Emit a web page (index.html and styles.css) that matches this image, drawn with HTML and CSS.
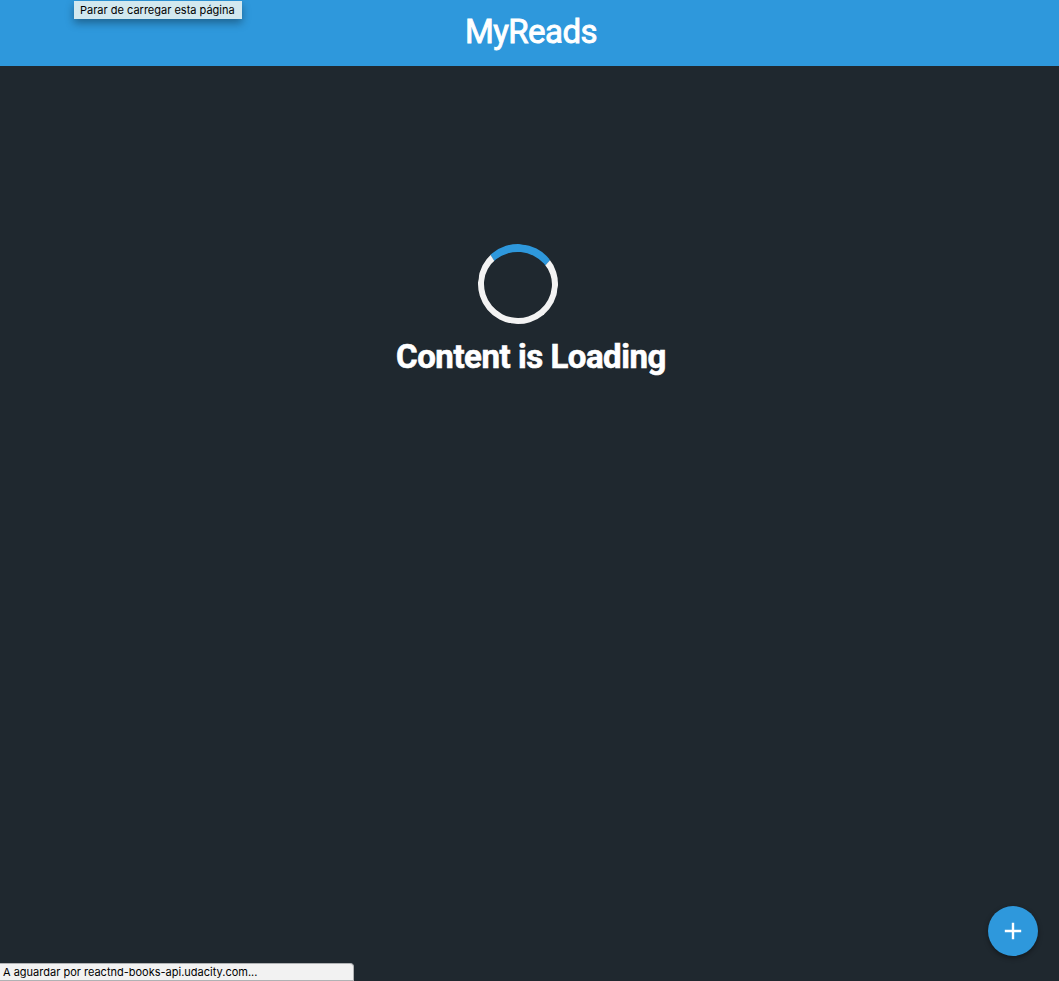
FILE: index.html
```html
<!DOCTYPE html>
<html lang="pt">
<head>
<meta charset="utf-8">
<title>MyReads</title>
<link rel="stylesheet" href="styles.css">
</head>
<body>
<div class="app">
  <header class="header"><h1 class="title">MyReads</h1></header>
  <main class="loading">
    <div class="spinner"></div>
    <h2 class="message">Content is Loading</h2>
  </main>
  <a class="add" href="#" aria-label="Add">
    <svg class="plus" viewBox="0 0 28 28"><path d="M22.2 15.2h-7v7h-2.4v-7h-7v-2.4h7v-7h2.4v7h7z"/></svg>
  </a>
  <div class="tooltip">Parar de carregar esta página</div>
  <div class="status">A aguardar por reactnd-books-api.udacity.com...</div>
</div>
</body>
</html>
```
FILE: styles.css
```css
* { box-sizing: border-box; }
body { margin: 0; font-family: Roboto, sans-serif; background: #1f282f; color: #fff; }
.app { position: relative; height: 981px; overflow: hidden; }
.header { height: 66px; background: #2e98dc; text-align: center; }
.title { margin: 0; padding: 12px 0 0 3px; font-size: 33px; line-height: 39px; font-weight: 400; letter-spacing: -0.55px; -webkit-text-stroke: 0.9px #fff; }
.loading { display: flex; flex-direction: column; align-items: center; padding-top: 178px; }
.spinner { width: 80px; height: 80px; margin-right: 23px; border: 6px solid #f3f3f3; border-top: 8px solid #2e98dc; border-radius: 50%; transform: rotate(5deg); }
.message { margin: 13px 0 0 3px; font-size: 33px; line-height: 39px; font-weight: 700; letter-spacing: -0.47px; white-space: nowrap; -webkit-text-stroke: 0.6px #fff; }
.add { position: absolute; left: 988px; top: 906px; width: 50px; height: 50px; border-radius: 50%; background: #2e98dc; display: grid; place-items: center; box-shadow: 0 2px 5px rgba(0,0,0,.4); }
.plus { width: 28px; height: 28px; fill: #fff; }
.tooltip, .status { position: absolute; font-family: Inter, sans-serif; font-size: 11px; color: #000; white-space: nowrap; }
.tooltip { left: 74px; top: 1px; width: 168px; height: 18px; padding-left: 6px; background: #d2e8ef; line-height: 18px; box-shadow: 0 4px 9px rgba(0,0,0,.35); }
.status { left: 0; top: 963px; width: 354px; height: 18px; padding-left: 3px; background: #f2f2f2; line-height: 17px; border: 1px solid #b0b2b4; border-left: 0; border-radius: 0 4px 0 0; }
```
